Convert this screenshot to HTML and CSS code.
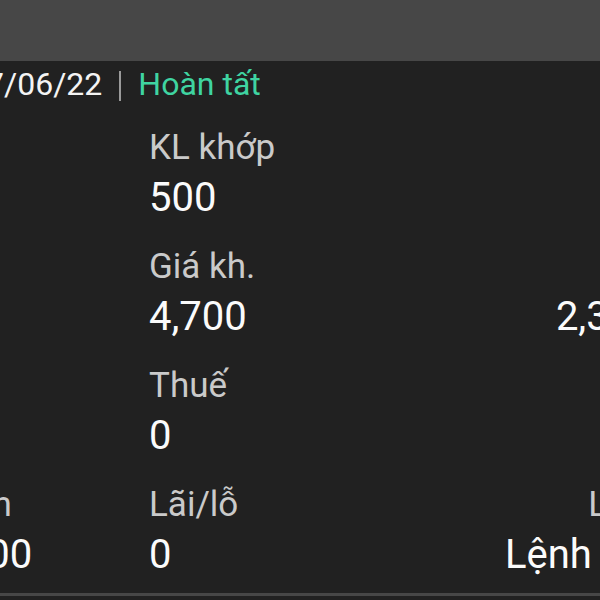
FILE: index.html
```html
<!DOCTYPE html>
<html lang="vi">
<head>
    <meta charset="UTF-8">
    <meta name="viewport" content="width=device-width, initial-scale=1.0">
    <title>Chi tiết lệnh</title>
    <link rel="stylesheet" href="styles.css">
</head>
<body>
    <div class="topbar"></div>
    <div class="card">
        <div class="card-head">
            <span class="date">17/06/22</span>
            <span class="sep"></span>
            <span class="status">Hoàn tất</span>
        </div>
        <div class="grid">
            <div class="cell"></div>
            <div class="cell">
                <div class="label">KL khớp</div>
                <div class="value">500</div>
            </div>
            <div class="cell right">
                <div class="label">Phí bán</div>
                <div class="value">&nbsp;</div>
            </div>

            <div class="cell"></div>
            <div class="cell">
                <div class="label">Giá kh.</div>
                <div class="value">4,700</div>
            </div>
            <div class="cell right">
                <div class="label">Giá trị</div>
                <div class="value">2,350,000</div>
            </div>

            <div class="cell"></div>
            <div class="cell">
                <div class="label">Thuế</div>
                <div class="value">0</div>
            </div>
            <div class="cell right"></div>

            <div class="cell">
                <div class="label">Tiền nhận</div>
                <div class="value">2,350,000</div>
            </div>
            <div class="cell">
                <div class="label">Lãi/lỗ</div>
                <div class="value">0</div>
            </div>
            <div class="cell right">
                <div class="label">Loại lệnh</div>
                <div class="value">Lệnh thường</div>
            </div>
        </div>
    </div>
    <div class="divider"></div>
</body>
</html>
```

FILE: styles.css
```css
html, body {
    margin: 0;
    padding: 0;
    background-color: #212121;
    overflow: hidden;
    height: 600px;
}
body {
    font-family: Roboto, "Noto Sans", Arial, sans-serif;
    color: #fafafa;
}
.topbar {
    height: 61px;
    background-color: #474747;
}
.card {
    width: 870px;
    margin-left: -141px;
    padding-bottom: 14px;
}
.card-head {
    display: flex;
    align-items: center;
    gap: 17px;
    padding: 3px 0 22px 109px;
    font-size: 32px;
    line-height: 40px;
}
.date {
    color: #f4f4f4;
}
.sep {
    width: 2px;
    height: 30px;
    margin-top: 4px;
    background-color: #9a9a9a;
}
.status {
    color: #3fd4a1;
}
.grid {
    display: grid;
    grid-template-columns: repeat(3, 290px);
    row-gap: 23px;
}
.cell {
    white-space: nowrap;
}
.right {
    text-align: right;
}
.label {
    font-size: 35px;
    line-height: 44px;
    color: #cacaca;
}
.value {
    margin-top: 4px;
    font-size: 40px;
    line-height: 48px;
    color: #fbfbfb;
}
.divider {
    height: 3px;
    background-color: #474747;
}
```
